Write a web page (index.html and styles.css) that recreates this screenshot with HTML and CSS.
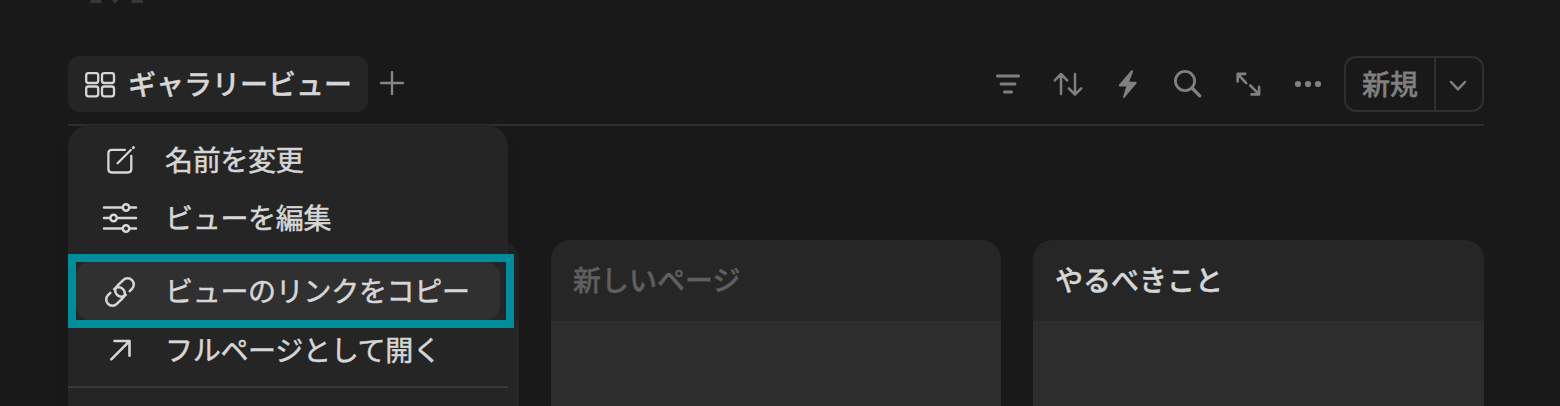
FILE: index.html
```html
<!DOCTYPE html>
<html lang="ja">
<head>
<meta charset="utf-8">
<title>ギャラリービュー</title>
<link rel="stylesheet" href="styles.css">
</head>
<body>
<div class="page">
  <svg class="heading-tail" width="56" height="4" viewBox="0 0 56 4"><path d="M1 0h10l1 3H0zM22 0h6l-2 3h-2zM42 0h11v3H41z" fill="#373737"/></svg>
  <header class="toolbar">
    <div class="tab">
      <svg class="icon" width="32" height="32" viewBox="0 0 32 32" fill="none" stroke="#d6d6d6" stroke-width="2.3"><rect x="2.200" y="5.200" width="12" height="9.800" rx="2.2"/><rect x="18" y="5.200" width="12" height="9.800" rx="2.2"/><rect x="2.200" y="18.500" width="12" height="9.800" rx="2.2"/><rect x="18" y="18.500" width="12" height="9.800" rx="2.2"/></svg>
      <span class="tab-label">ギャラリービュー</span>
    </div>
    <svg class="add" width="24" height="24" viewBox="0 0 24 24" fill="none" stroke="#858585" stroke-width="2.4" stroke-linecap="round"><path d="M12 1v22M1 12h22"/></svg>
    <div class="tools">
      <svg width="32" height="32" viewBox="0 0 32 32" fill="none" stroke="#808080" stroke-width="2.8" stroke-linecap="round"><path d="M5.400 8h21.200M9 16h14M12.400 24h7.200"/></svg>
      <svg width="32" height="32" viewBox="0 0 32 32" fill="none" stroke="#808080" stroke-width="2.500" stroke-linecap="round" stroke-linejoin="round"><path d="M9 26V6.300M2.800 12.300L9 6l6.200 6.300M23 6v20.400M16.800 20.400L23 26.700l6.200-6.300"/></svg>
      <svg width="32" height="32" viewBox="0 0 32 32" fill="#808080"><path d="M19.200 2.600L7 16.800q-.7 1.400.6 1.600h6.600L11 28.700q-.1 1.900 1.400 1L24.400 15.400q1-1.400-.6-1.600h-6.600l3.900-10.400q.1-1.900-1.900-.8z"/></svg>
      <svg width="32" height="32" viewBox="0 0 32 32" fill="none" stroke="#808080" stroke-linecap="round"><circle cx="13" cy="13" r="9.600" stroke-width="2.800"/><path d="M20.500 20.500l7.300 7.300" stroke-width="3.300"/></svg>
      <svg width="32" height="32" viewBox="0 0 32 32" fill="none" stroke="#808080" stroke-width="2.600" stroke-linecap="round" stroke-linejoin="round"><path d="M13.200 5.900H5.700v7.500M5.900 6.100l8.300 9M19.500 26.400h7.600v-7.500M26.900 26.200L18.300 17.500"/></svg>
      <svg width="32" height="32" viewBox="0 0 32 32" fill="#808080"><circle cx="6" cy="16" r="3.100"/><circle cx="16" cy="16" r="3.100"/><circle cx="26" cy="16" r="3.100"/></svg>
    </div>
    <div class="new-button">
      <span class="new-label">新規</span>
      <span class="new-more"><svg width="18" height="12" viewBox="0 0 18 12" fill="none" stroke="#808080" stroke-width="2.500" stroke-linecap="round" stroke-linejoin="round"><path d="M2 2l7 7.300L16 2"/></svg></span>
    </div>
  </header>
  <main class="gallery">
    <article class="card covered"><h2 class="card-title"></h2></article>
    <article class="card"><h2 class="card-title untitled">新しいページ</h2></article>
    <article class="card"><h2 class="card-title third">やるべきこと</h2></article>
  </main>
  <nav class="menu">
    <div class="item rename">
      <svg width="36" height="36" viewBox="0 0 36 36" fill="none" stroke="#d6d6d6" stroke-width="2.300" stroke-linecap="round" stroke-linejoin="round"><path d="M23 7.800H9.800q-3.400 0-3.400 3.400v15.900q0 3.400 3.400 3.400h16.100q3.400 0 3.400-3.400V13.800"/><path d="M15.600 21.200L28.800 8"/><path d="M31.200 5.700l.3-.3" stroke-width="2.800"/></svg>
      <span>名前を変更</span>
    </div>
    <div class="item edit">
      <svg width="36" height="36" viewBox="0 0 36 36" fill="none" stroke="#d6d6d6" stroke-width="2.500" stroke-linecap="round"><path d="M2 7.500h18M28 7.500h6M2 18h6M15.500 18H34M2 28.500h18M28 28.500h6"/><circle cx="24" cy="7.500" r="3.200"/><circle cx="11.600" cy="18" r="3.200"/><circle cx="24" cy="28.500" r="3.200"/></svg>
      <span>ビューを編集</span>
    </div>
    <div class="focus">
      <div class="item copy">
        <svg width="36" height="36" viewBox="0 0 36 36" fill="none" stroke="#d6d6d6" stroke-width="2.500" stroke-linecap="round"><g transform="translate(0 1) rotate(-45 18 18)"><path id="link-half" d="M25.500 24.200H28.700a6.200 6.200 0 0 0 0-12.400H20a6.200 6.200 0 0 0 0 12.400"/><path d="M10.500 11.800H7.300a6.200 6.200 0 0 0 0 12.400H16a6.200 6.200 0 0 0 0-12.400"/></g></svg>
        <span>ビューのリンクをコピー</span>
      </div>
    </div>
    <div class="item open">
      <svg width="36" height="36" viewBox="0 0 36 36" fill="none" stroke="#d6d6d6" stroke-width="2.600" stroke-linecap="round" stroke-linejoin="round"><path d="M9.300 27.300L27.200 9.400M12.500 9h15v14.700"/></svg>
      <span>フルページとして開く</span>
    </div>
    <div class="divider"></div>
  </nav>
</div>
</body>
</html>
```
FILE: styles.css
```css
* { box-sizing: border-box; }
body {
  margin: 0;
  background: #191919;
  color: #d6d6d6;
  font-family: "Noto Sans CJK JP", sans-serif;
  font-size: 28px;
  overflow: hidden;
}
svg { display: block; flex: none; }
.page {
  position: relative;
  width: 1560px;
  height: 406px;
  padding: 0 76px 0 68px;
  overflow: hidden;
}
.heading-tail { margin-left: 22px; }
.toolbar {
  display: flex;
  align-items: center;
  height: 122px;
  padding: 52px 0 12px;
  border-bottom: 2px solid #2e2e2e;
}
.tab {
  display: flex;
  align-items: center;
  gap: 12px;
  width: 300px;
  height: 56px;
  padding-left: 16px;
  border-radius: 12px;
  background: #252525;
}
.tab-label, .new-label, .card-title {
  font-weight: 500;
  white-space: nowrap;
  line-height: 40px;
  -webkit-text-stroke: .4px currentColor;
}
.tab-label { margin-top: -2px; }
.add { margin: 0 0 2px 12px; }
.tools { display: flex; gap: 28px; margin-left: auto; }
.new-button {
  display: flex;
  width: 140px;
  height: 56px;
  margin-left: 20px;
  border: 2px solid #303030;
  border-radius: 12px;
}
.new-label {
  width: 90px;
  padding-left: 16px;
  line-height: 50px;
  color: #808080;
  border-right: 2px solid #303030;
}
.new-more { display: flex; flex: 1; align-items: center; justify-content: center; padding: 3px 2px 0 0; }
.gallery {
  display: grid;
  grid-template-columns: 451px 450px 451px;
  gap: 32px;
  margin-top: 114px;
}
.card {
  height: 240px;
  border-radius: 20px;
  background: #2d2d2d;
  overflow: hidden;
}
.card-title {
  height: 81px;
  margin: 0;
  padding: 19px 22px;
  font-size: 28px;
  background: #262626;
}
.covered { background: #272727; }
.covered .card-title { background: #212121; }
.untitled { color: #5f5f5f; }
.menu {
  position: absolute;
  left: 68px;
  top: 125px;
  width: 440px;
  height: 320px;
  padding-top: 6px;
  border-radius: 22px;
  background: #252525;
  box-shadow: 0 8px 18px rgba(0, 0, 0, .08);
}
.item {
  display: flex;
  align-items: center;
  gap: 27px;
  height: 58px;
  padding-left: 34px;
  line-height: 40px;
  white-space: nowrap;
  letter-spacing: -.3px;
  -webkit-text-stroke: .5px currentColor;
}
.item span { margin-top: -3px; }
.focus {
  width: 446px;
  height: 74px;
  margin-top: 7px;
  border: 8px solid #008c9b;
  background: #252525;
}
.copy {
  width: 424px;
  padding-left: 26px;
  border-radius: 14px;
  background: #303030;
}
.open { height: 44px; }
.divider { height: 2px; margin-top: 14px; background: #383838; }
```
